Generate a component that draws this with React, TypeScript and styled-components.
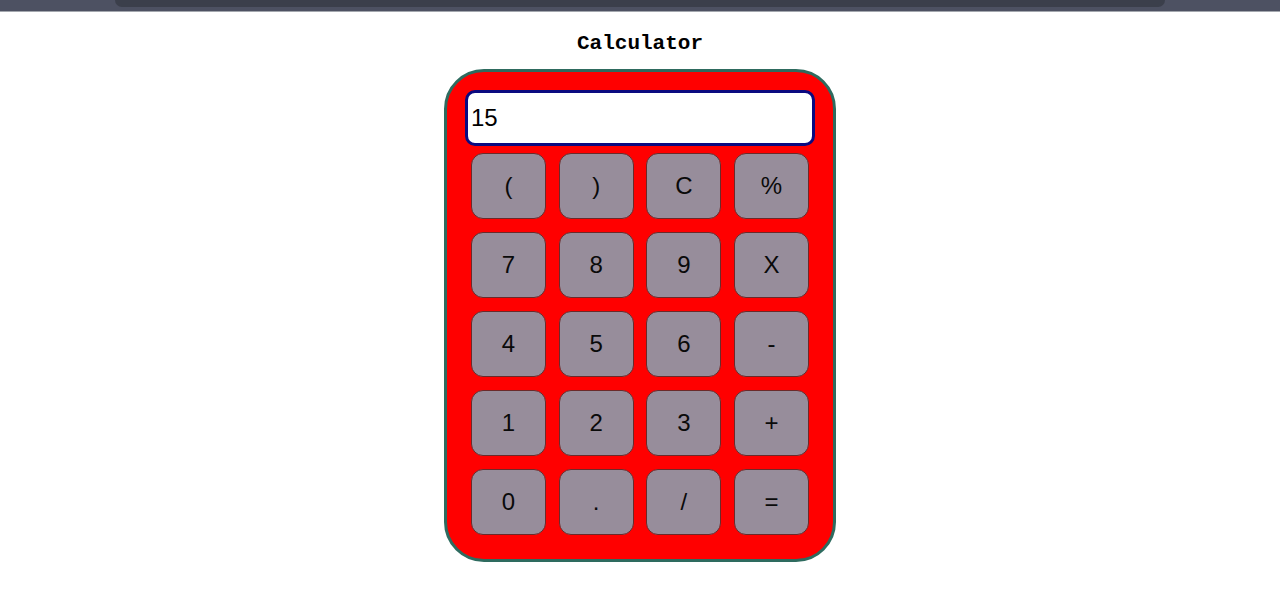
import styled, { createGlobalStyle } from "styled-components";

const KEYS: string[] = [
  "(", ")", "C", "%",
  "7", "8", "9", "X",
  "4", "5", "6", "-",
  "1", "2", "3", "+",
  "0", ".", "/", "=",
];

const GlobalStyle = createGlobalStyle`
  body {
    margin: 0;
    background: #ffffff;
    font-family: "Liberation Sans", Arial, sans-serif;
  }
`;

export default function App() {
  return (
    <>
      <GlobalStyle />
      <TopBar>
        <AddressPill />
      </TopBar>
      <Page>
        <Title>Calculator</Title>
        <Calculator>
          <Display type="text" value="15" readOnly />
          <Keypad>
            {KEYS.map((key) => (
              <Key key={key}>{key}</Key>
            ))}
          </Keypad>
        </Calculator>
      </Page>
    </>
  );
}

const TopBar = styled.div`
  height: 12px;
  background: #4d5162;
  border-bottom: 1px solid #a3a7ae;
  box-sizing: border-box;
  display: flex;
  justify-content: center;
`;

const AddressPill = styled.div`
  width: 1050px;
  height: 7px;
  background: #3b3f4b;
  border-radius: 0 0 8px 8px;
`;

const Page = styled.div`
  display: flex;
  flex-direction: column;
  align-items: center;
`;

const Title = styled.h1`
  margin: 20px 0 13px;
  font-family: "Liberation Mono", "Courier New", monospace;
  font-size: 21px;
  line-height: 24px;
  font-weight: bold;
  color: #000;
`;

const Calculator = styled.div`
  width: 392px;
  box-sizing: border-box;
  padding: 18px 0 24px;
  background: #ff0000;
  border: 3px solid #2e6b5f;
  border-radius: 40px;
  display: flex;
  flex-direction: column;
  align-items: center;
`;

const Display = styled.input`
  width: 350px;
  height: 56px;
  box-sizing: border-box;
  margin: 0;
  padding: 0 3px;
  border: 3px solid #0a0a80;
  border-radius: 10px;
  background: #fff;
  font-family: "Liberation Sans", Arial, sans-serif;
  font-size: 24px;
  color: #000;
  outline: none;
`;

const Keypad = styled.div`
  margin-top: 7px;
  display: grid;
  grid-template-columns: repeat(4, 75px);
  grid-auto-rows: 66px;
  column-gap: 12.7px;
  row-gap: 13px;
`;

const Key = styled.button`
  background: #978d9b;
  border: 1px solid #6b2a2a;
  border-radius: 12px;
  font-family: "Liberation Sans", Arial, sans-serif;
  font-size: 24px;
  color: #0a0a0a;
  padding: 0;
  cursor: pointer;
`;
